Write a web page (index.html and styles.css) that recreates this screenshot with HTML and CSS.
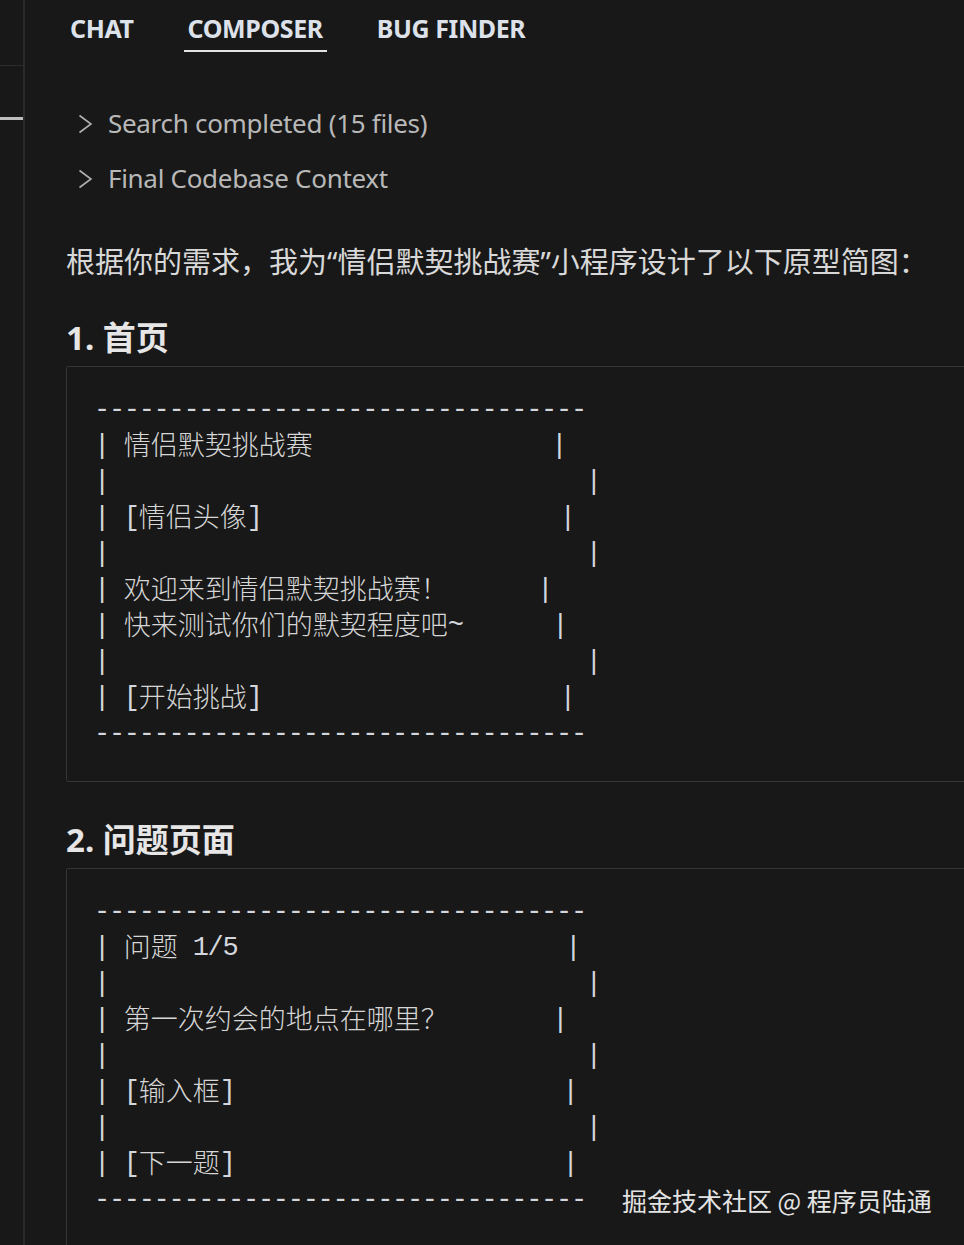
FILE: index.html
```html
<!DOCTYPE html>
<html lang="zh-CN">
<head>
<meta charset="utf-8">
<title>Composer</title>
<link rel="stylesheet" href="styles.css">
</head>
<body>
<div class="app">
  <aside class="rail">
    <div class="rail-line"></div>
    <div class="rail-mark"></div>
  </aside>
  <main class="main">
    <nav class="tabs">
      <span class="tab">CHAT</span>
      <span class="tab active">COMPOSER</span>
      <span class="tab">BUG FINDER</span>
    </nav>
    <div class="steps">
      <div class="step">
        <svg class="chev" width="20" height="24" viewBox="0 0 20 24"><path d="M3.5 3.5 L15 12 L3.5 20.5" fill="none" stroke="currentColor" stroke-width="1.6"/></svg>
        <span>Search completed (15 files)</span>
      </div>
      <div class="step">
        <svg class="chev" width="20" height="24" viewBox="0 0 20 24"><path d="M3.5 3.5 L15 12 L3.5 20.5" fill="none" stroke="currentColor" stroke-width="1.6"/></svg>
        <span>Final Codebase Context</span>
      </div>
    </div>
    <p class="intro">根据你的需求，我为“情侣默契挑战赛”小程序设计了以下原型简图：</p>
    <h2 class="heading">1. 首页</h2>
    <pre class="code">---------------------------------
| <span class="zh">情侣默契挑战赛</span>                |
|                                |
| [<span class="zh">情侣头像</span>]                    |
|                                |
| <span class="zh">欢迎来到情侣默契挑战赛！</span>      |
| <span class="zh">快来测试你们的默契程度吧</span>~      |
|                                |
| [<span class="zh">开始挑战</span>]                    |
---------------------------------</pre>
    <h2 class="heading">2. 问题页面</h2>
    <pre class="code">---------------------------------
| <span class="zh">问题</span> 1/5                      |
|                                |
| <span class="zh">第一次约会的地点在哪里？</span>       |
|                                |
| [<span class="zh">输入框</span>]                      |
|                                |
| [<span class="zh">下一题</span>]                      |
---------------------------------</pre>
  </main>
  <div class="watermark">掘金技术社区 @ 程序员陆通</div>
</div>
</body>
</html>
```
FILE: styles.css
```css
html, body {
  margin: 0;
  padding: 0;
  background: #181818;
  height: 100%;
  overflow: hidden;
}

.app {
  position: relative;
  display: flex;
  min-height: 1245px;
  background: #181818;
  font-family: "Noto Sans", "Noto Sans CJK SC", sans-serif;
}

.rail {
  width: 23px;
  flex: none;
  border-right: 2px solid #2b2b2b;
  display: flex;
  flex-direction: column;
}

.rail-line {
  margin-top: 65px;
  height: 1px;
  background: #2c2c2c;
}

.rail-mark {
  margin-top: 51px;
  height: 3px;
  background: #bdbdbd;
}

.main {
  flex: 1;
  padding-left: 41px;
  overflow: hidden;
}

.tabs {
  display: flex;
  gap: 46px;
  height: 54px;
}

.tab {
  padding: 11px 4px 0;
  height: 41px;
  line-height: 34px;
  font-size: 25px;
  font-weight: 700;
  color: #dde1ea;
  letter-spacing: -0.4px;
  border-bottom: 2px solid transparent;
  box-sizing: content-box;
}

.tab.active {
  border-bottom-color: #e2e2e2;
  height: 39px;
}

.steps {
  margin-top: 50px;
  display: flex;
  flex-direction: column;
  gap: 15px;
}

.step {
  display: flex;
  align-items: center;
  gap: 12px;
  height: 40px;
  padding-left: 10px;
  font-size: 26px;
  color: #b8b8b8;
  letter-spacing: -0.3px;
}

.step span {
  position: relative;
  top: -1px;
}

.chev {
  color: #b0b0b0;
  flex: none;
}

.intro {
  margin: 42px 0 33px;
  font-size: 29px;
  line-height: 42px;
  color: #d8d8d8;
  white-space: nowrap;
}

.heading {
  margin: 0 0 6px;
  font-size: 33px;
  line-height: 44px;
  font-weight: 700;
  color: #e6e6e6;
}

.code {
  margin: 0 -30px 36px 0;
  padding: 25px 27px 29px 27px;
  border: 1px solid #353535;
  border-radius: 2px;
  font-family: "Liberation Mono", "Noto Sans CJK SC", monospace;
  font-size: 27px;
  line-height: 36px;
  letter-spacing: -1.3px;
  color: #d3d6dc;
  white-space: pre;
}

.code .zh {
  font-family: "Noto Sans CJK SC", sans-serif;
  font-weight: 300;
  line-height: 1;
  letter-spacing: 0;
  vertical-align: -2px;
  color: #d6d6d6;
}

.watermark {
  position: absolute;
  left: 622px;
  top: 1183px;
  font-size: 25px;
  line-height: 34px;
  color: #e4e4e4;
  font-family: "Noto Sans CJK SC", sans-serif;
  white-space: nowrap;
}
```
